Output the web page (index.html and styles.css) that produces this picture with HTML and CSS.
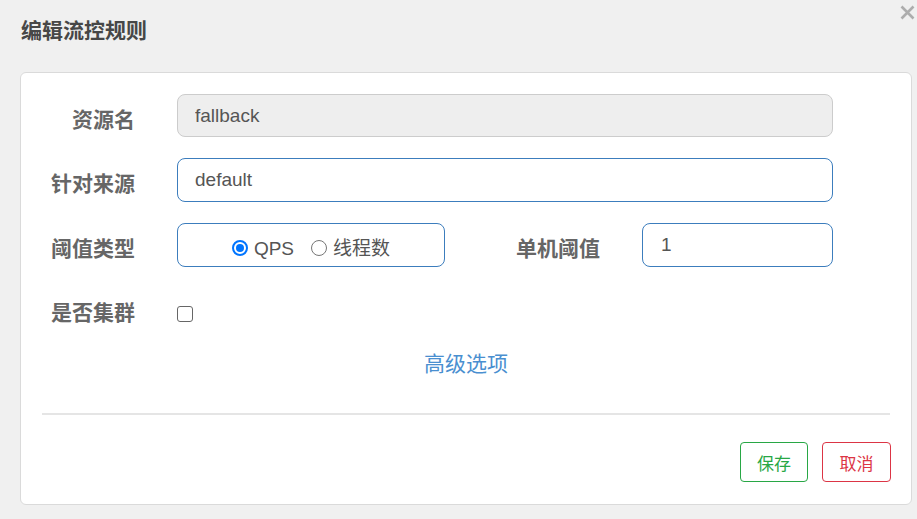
FILE: index.html
```html
<!DOCTYPE html>
<html lang="zh-CN">
<head>
<meta charset="utf-8">
<title>编辑流控规则</title>
<link rel="stylesheet" href="styles.css">
</head>
<body>
<div class="modal">
  <div class="modal-header">
    <h4 class="modal-title">编辑流控规则</h4>
    <button class="close" type="button" aria-label="关闭">
      <svg width="15" height="15" viewBox="0 0 15 15"><path d="M1.5 1.5 L13.5 13.5 M13.5 1.5 L1.5 13.5" stroke="#adadad" stroke-width="2.6" stroke-linecap="butt" fill="none"/></svg>
    </button>
  </div>
  <div class="card">
    <form class="form">
      <div class="row row-first">
        <label class="label">资源名</label>
        <input class="input input-disabled" type="text" value="fallback" disabled>
      </div>
      <div class="row">
        <label class="label">针对来源</label>
        <input class="input" type="text" value="default">
      </div>
      <div class="row">
        <label class="label">阈值类型</label>
        <div class="radio-box">
          <label class="radio"><span class="radio-dot checked"></span><span class="radio-text">QPS</span></label>
          <label class="radio"><span class="radio-dot"></span><span class="radio-text">线程数</span></label>
        </div>
        <label class="label label-second">单机阈值</label>
        <input class="input input-small" type="text" value="1">
      </div>
      <div class="row row-check">
        <label class="label">是否集群</label>
        <span class="checkbox"></span>
      </div>
      <div class="advanced"><a class="advanced-link">高级选项</a></div>
    </form>
    <div class="divider"></div>
    <div class="footer">
      <button class="btn btn-save" type="button">保存</button>
      <button class="btn btn-cancel" type="button">取消</button>
    </div>
  </div>
</div>
</body>
</html>
```

FILE: styles.css
```css
* { box-sizing: border-box; }
html, body { margin: 0; padding: 0; }
body {
  background: #f0f0f0;
  font-family: "Liberation Sans", "Noto Sans CJK SC", sans-serif;
  width: 917px;
  height: 519px;
  overflow: hidden;
}
.modal { display: flex; flex-direction: column; }
.modal-header {
  height: 72px;
  display: flex;
  justify-content: space-between;
  align-items: flex-start;
}
.modal-title {
  margin: 15px 0 0 21px;
  font-family: "Noto Sans CJK SC", sans-serif;
  font-size: 21px;
  line-height: 28px;
  font-weight: 700;
  color: #474747;
}
.close {
  border: 0;
  background: transparent;
  padding: 0;
  margin: 5px 0 0 0;
  width: 17px;
  height: 15px;
  display: flex;
  justify-content: flex-start;
}
.card {
  margin-left: 20px;
  width: 892px;
  height: 433px;
  background: #fff;
  border: 1px solid #dadada;
  border-radius: 6px;
  display: flex;
  flex-direction: column;
}
.form { padding-top: 21px; }
.row {
  display: flex;
  align-items: center;
  height: 44px;
  margin-top: 21px;
}
.row-first { margin-top: 0; height: 43px; }
.row-check { margin-top: 20px; }
.label {
  width: 114px;
  margin-right: 42px;
  margin-top: 4px;
  text-align: right;
  font-family: "Noto Sans CJK SC", sans-serif;
  font-size: 21px;
  font-weight: 700;
  color: #666;
  line-height: 28px;
}
.label-second { width: 155px; }
.input {
  width: 656px;
  height: 100%;
  border: 1px solid #3c7dbd;
  border-radius: 8px;
  padding: 0 17px;
  font-family: "Liberation Sans", "Noto Sans CJK SC", sans-serif;
  font-size: 19px;
  color: #555;
  background: #fff;
  outline: none;
}
.input-disabled {
  background: #eeeeee;
  border-color: #cccccc;
  color: #555;
  -webkit-text-fill-color: #555;
  opacity: 1;
}
.input-small { width: 191px; padding-left: 18px; }
.radio-box {
  width: 268px;
  height: 44px;
  border: 1px solid #3c7dbd;
  border-radius: 8px;
  display: flex;
  justify-content: center;
  align-items: center;
  gap: 17px;
}
.radio { display: flex; align-items: center; gap: 6px; margin-top: 4px; }
.radio-dot {
  width: 16px;
  height: 16px;
  border-radius: 50%;
  border: 1.5px solid #767676;
  background: #fff;
  margin-top: 1px;
  position: relative;
}
.radio-dot.checked {
  border: 2px solid #0075ff;
}
.radio-dot.checked::after {
  content: "";
  position: absolute;
  left: 2px;
  top: 2px;
  width: 8px;
  height: 8px;
  border-radius: 50%;
  background: #0075ff;
}
.radio-text {
  font-family: "Liberation Sans", "Noto Sans CJK SC", sans-serif;
  font-size: 19px;
  color: #555;
  line-height: 24px;
  margin-top: 4px;
}
.checkbox {
  width: 16px;
  height: 16px;
  border: 1.5px solid #666;
  border-radius: 3px;
  background: #fff;
  margin-top: 9px;
}
.advanced {
  margin-top: 16px;
  text-align: center;
  line-height: 30px;
}
.advanced-link {
  font-family: "Noto Sans CJK SC", sans-serif;
  font-size: 21px;
  color: #4a8fd0;
  cursor: pointer;
}
.divider {
  margin: 32px 21px 0 21px;
  height: 2px;
  background: #e5e5e5;
}
.footer {
  margin-top: 27px;
  padding-right: 20px;
  display: flex;
  justify-content: flex-end;
  gap: 14px;
}
.btn {
  height: 40px;
  padding: 0 16px;
  background: #fff;
  border-radius: 4px;
  font-family: "Noto Sans CJK SC", sans-serif;
  font-size: 17px;
  font-weight: 400;
  line-height: 1;
}
.btn-save { border: 1px solid #28a745; color: #28a745; width: 68px; }
.btn-cancel { border: 1px solid #dc3545; color: #dc3545; width: 69px; }
```
